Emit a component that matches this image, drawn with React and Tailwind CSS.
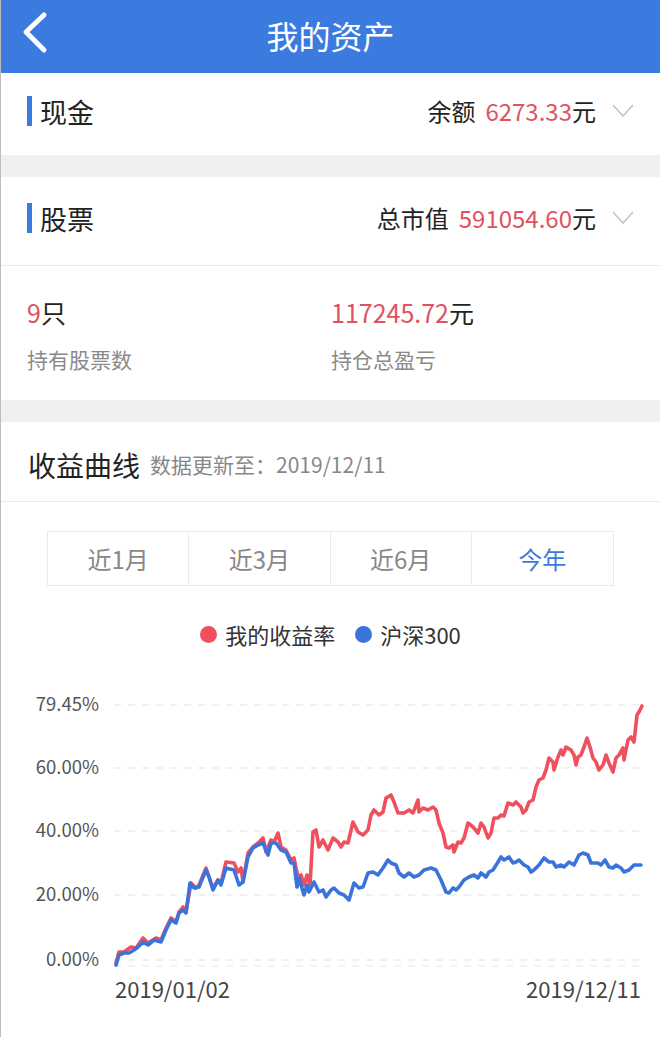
import React from "react";

const red = [[115,963],[118,952],[123,952],[130,947],[135,948],[142,938],[147,943],[155,938],[160,940],[165,928],[170,918],[175,922],[178,912],[182,907],[185,912],[190,883],[195,888],[198,885],[205,868],[208,877],[212,888],[217,880],[220,883],[225,862],[233,863],[237,872],[240,868],[242,882],[247,853],[252,847],[257,843],[262,838],[265,852],[270,840],[273,842],[277,833],[280,847],[285,850],[290,860],[293,858],[297,877],[300,875],[303,885],[306,875],[309,885],[312,832],[315,830],[318,847],[322,840],[327,850],[332,838],[337,842],[340,847],[343,842],[347,843],[352,822],[357,832],[362,835],[367,830],[370,815],[373,810],[378,815],[382,812],[385,798],[390,795],[393,802],[397,813],[403,813],[408,810],[412,813],[417,800],[418,812],[422,808],[427,810],[432,807],[435,810],[438,823],[442,833],[445,847],[448,848],[452,845],[453,852],[457,842],[460,843],[463,838],[467,823],[472,827],[477,833],[480,823],[483,827],[487,838],[490,833],[493,818],[497,818],[500,815],[503,816],[507,803],[512,805],[515,802],[520,807],[522,813],[525,810],[528,802],[532,800],[535,787],[538,780],[542,778],[545,770],[548,758],[552,762],[553,770],[557,757],[560,750],[562,755],[565,747],[570,750],[573,755],[575,765],[577,757],[580,755],[583,747],[586,738],[589,747],[592,758],[595,762],[598,770],[602,765],[605,755],[608,763],[612,772],[615,758],[618,755],[622,748],[623,760],[627,740],[630,737],[633,742],[636,715],[638,712],[641,706]];

const blue = [[115,965],[118,955],[123,953],[128,953],[133,950],[137,947],[142,942],[147,945],[153,940],[160,942],[165,930],[170,920],[175,923],[178,913],[182,910],[185,913],[189,883],[193,888],[198,887],[205,870],[208,877],[212,890],[217,880],[220,885],[225,868],[233,870],[238,885],[242,882],[247,857],[252,848],[257,845],[262,843],[267,855],[270,843],[275,843],[280,850],[285,852],[290,863],[293,863],[296,887],[298,878],[303,895],[306,885],[308,892],[313,882],[318,892],[322,890],[325,897],[330,890],[333,888],[338,893],[343,895],[348,900],[353,883],[358,888],[362,887],[367,873],[372,872],[377,875],[382,868],[387,860],[390,863],[395,865],[398,873],[403,877],[408,873],[413,877],[418,875],[423,870],[430,868],[435,870],[440,880],[445,892],[448,893],[452,888],[455,890],[458,887],[463,880],[468,877],[473,875],[477,878],[480,873],[485,877],[488,872],[492,870],[497,862],[500,857],[503,860],[508,857],[512,863],[515,862],[518,860],[523,865],[527,867],[530,872],[533,870],[538,865],[543,858],[548,862],[552,862],[555,867],[560,865],[563,867],[568,862],[573,865],[578,855],[582,853],[587,855],[590,863],[597,863],[600,865],[604,860],[608,867],[612,868],[615,865],[620,868],[623,872],[628,870],[633,865],[637,865],[640,865]];

const pts = (a) => a.map((p) => p.join(",")).join(" ");

function Chevron() {
  return (
    <svg width="22" height="14" viewBox="0 0 22 14" className="ml-[16px]">
      <polyline points="1,1 11,12 21,1" fill="none" stroke="#c4c4c4" strokeWidth="1.6" />
    </svg>
  );
}

function Title({ children }) {
  return (
    <div className="flex items-center">
      <div className="w-[5px] h-[30px] bg-[#3b7be0]" />
      <div className="ml-[8px] text-[27px] text-[#222] leading-none">{children}</div>
    </div>
  );
}

export default function App() {
  const font = { fontFamily: '"Noto Sans CJK SC", "Noto Sans", sans-serif' };
  const grid = [705, 768, 831, 895, 960];
  const labels = ["79.45%", "60.00%", "40.00%", "20.00%", "0.00%"];
  const tabs = ["近1月", "近3月", "近6月", "今年"];
  return (
    <div className="w-[660px] h-[1037px] bg-white overflow-hidden border-l border-[#bdbdbd]" style={font}>
      <div className="relative h-[73px] bg-[#3b7be0] flex items-center justify-center">
        <svg className="absolute left-[18px] top-[10px]" width="34" height="48" viewBox="0 0 34 48">
          <polyline points="25,5 7,22 25,40" fill="none" stroke="white" strokeWidth="5" strokeLinecap="round" strokeLinejoin="round" />
        </svg>
        <div className="text-white text-[32px] mb-[4px]">我的资产</div>
      </div>

      <div className="h-[82px] flex items-center justify-between pl-[26px] pr-[26px] pb-[6px]">
        <Title>现金</Title>
        <div className="flex items-center text-[24px] text-[#222]">
          <span>余额</span>
          <span className="ml-[10px] text-[#e0525f]">6273.33</span>
          <span>元</span>
          <Chevron />
        </div>
      </div>

      <div className="h-[22px] bg-[#f0f0f0]" />

      <div className="h-[89px] flex items-center justify-between pl-[26px] pr-[26px] pb-[6px] border-b border-[#ececec]">
        <Title>股票</Title>
        <div className="flex items-center text-[24px] text-[#222]">
          <span>总市值</span>
          <span className="ml-[10px] text-[#e0525f]">591054.60</span>
          <span>元</span>
          <Chevron />
        </div>
      </div>

      <div className="h-[134px] flex pt-[30px]">
        <div className="w-[330px] pl-[26px]">
          <div className="text-[25px] leading-[32px] text-[#222]"><span className="text-[#e0525f]">9</span>只</div>
          <div className="mt-[17px] text-[21px] leading-[28px] text-[#8a8a8a]">持有股票数</div>
        </div>
        <div>
          <div className="text-[25px] leading-[32px] text-[#222]"><span className="text-[#e0525f]">117245.72</span>元</div>
          <div className="mt-[17px] text-[21px] leading-[28px] text-[#8a8a8a]">持仓总盈亏</div>
        </div>
      </div>

      <div className="h-[22px] bg-[#f0f0f0]" />

      <div className="h-[80px] flex items-center pl-[27px] border-b border-[#ececec] pt-[6px]">
        <span className="text-[28px] text-[#222]">收益曲线</span>
        <span className="ml-[10px] text-[21px] text-[#888]">数据更新至：2019/12/11</span>
      </div>

      <div className="mt-[29px] mx-[46px] h-[55px] grid grid-cols-4 border border-[#ebebeb]">
        {tabs.map((t, i) => (
          <div
            key={t}
            className={
              "flex items-center justify-center text-[24px] " +
              (i < 3 ? "border-r border-[#ebebeb] text-[#888]" : "text-[#3b7be0]")
            }
          >
            {t}
          </div>
        ))}
      </div>

      <div className="mt-[33px] h-[30px] flex items-center justify-center text-[22px] text-[#333]">
        <span className="w-[17px] h-[17px] rounded-full bg-[#f0505e]" />
        <span className="ml-[8px]">我的收益率</span>
        <span className="ml-[20px] w-[17px] h-[17px] rounded-full bg-[#3a74db]" />
        <span className="ml-[8px]">沪深300</span>
      </div>

      <svg width="660" height="364" viewBox="0 673 660 364" className="block mt-[24px]">
        {grid.map((y) => (
          <line key={y} x1="113" x2="640" y1={y} y2={y} stroke="#e2e2e2" strokeWidth="1.2" strokeDasharray="7 7" />
        ))}
        <line x1="113" x2="640" y1="966" y2="966" stroke="#e2e6ea" strokeWidth="1.2" strokeDasharray="7 7" />
        {labels.map((l, i) => (
          <text key={l} x="98" y={grid[i] + 6} textAnchor="end" fontSize="18.5" fill="#555" style={font}>{l}</text>
        ))}
        <polyline points={pts(red)} fill="none" stroke="#f0505e" strokeWidth="3.6" strokeLinejoin="round" strokeLinecap="round" />
        <polyline points={pts(blue)} fill="none" stroke="#3a74db" strokeWidth="3.6" strokeLinejoin="round" strokeLinecap="round" />
        <text x="114" y="998" fontSize="22" fill="#444" style={font}>2019/01/02</text>
        <text x="640" y="998" fontSize="22" fill="#444" textAnchor="end" style={font}>2019/12/11</text>
      </svg>
    </div>
  );
}
